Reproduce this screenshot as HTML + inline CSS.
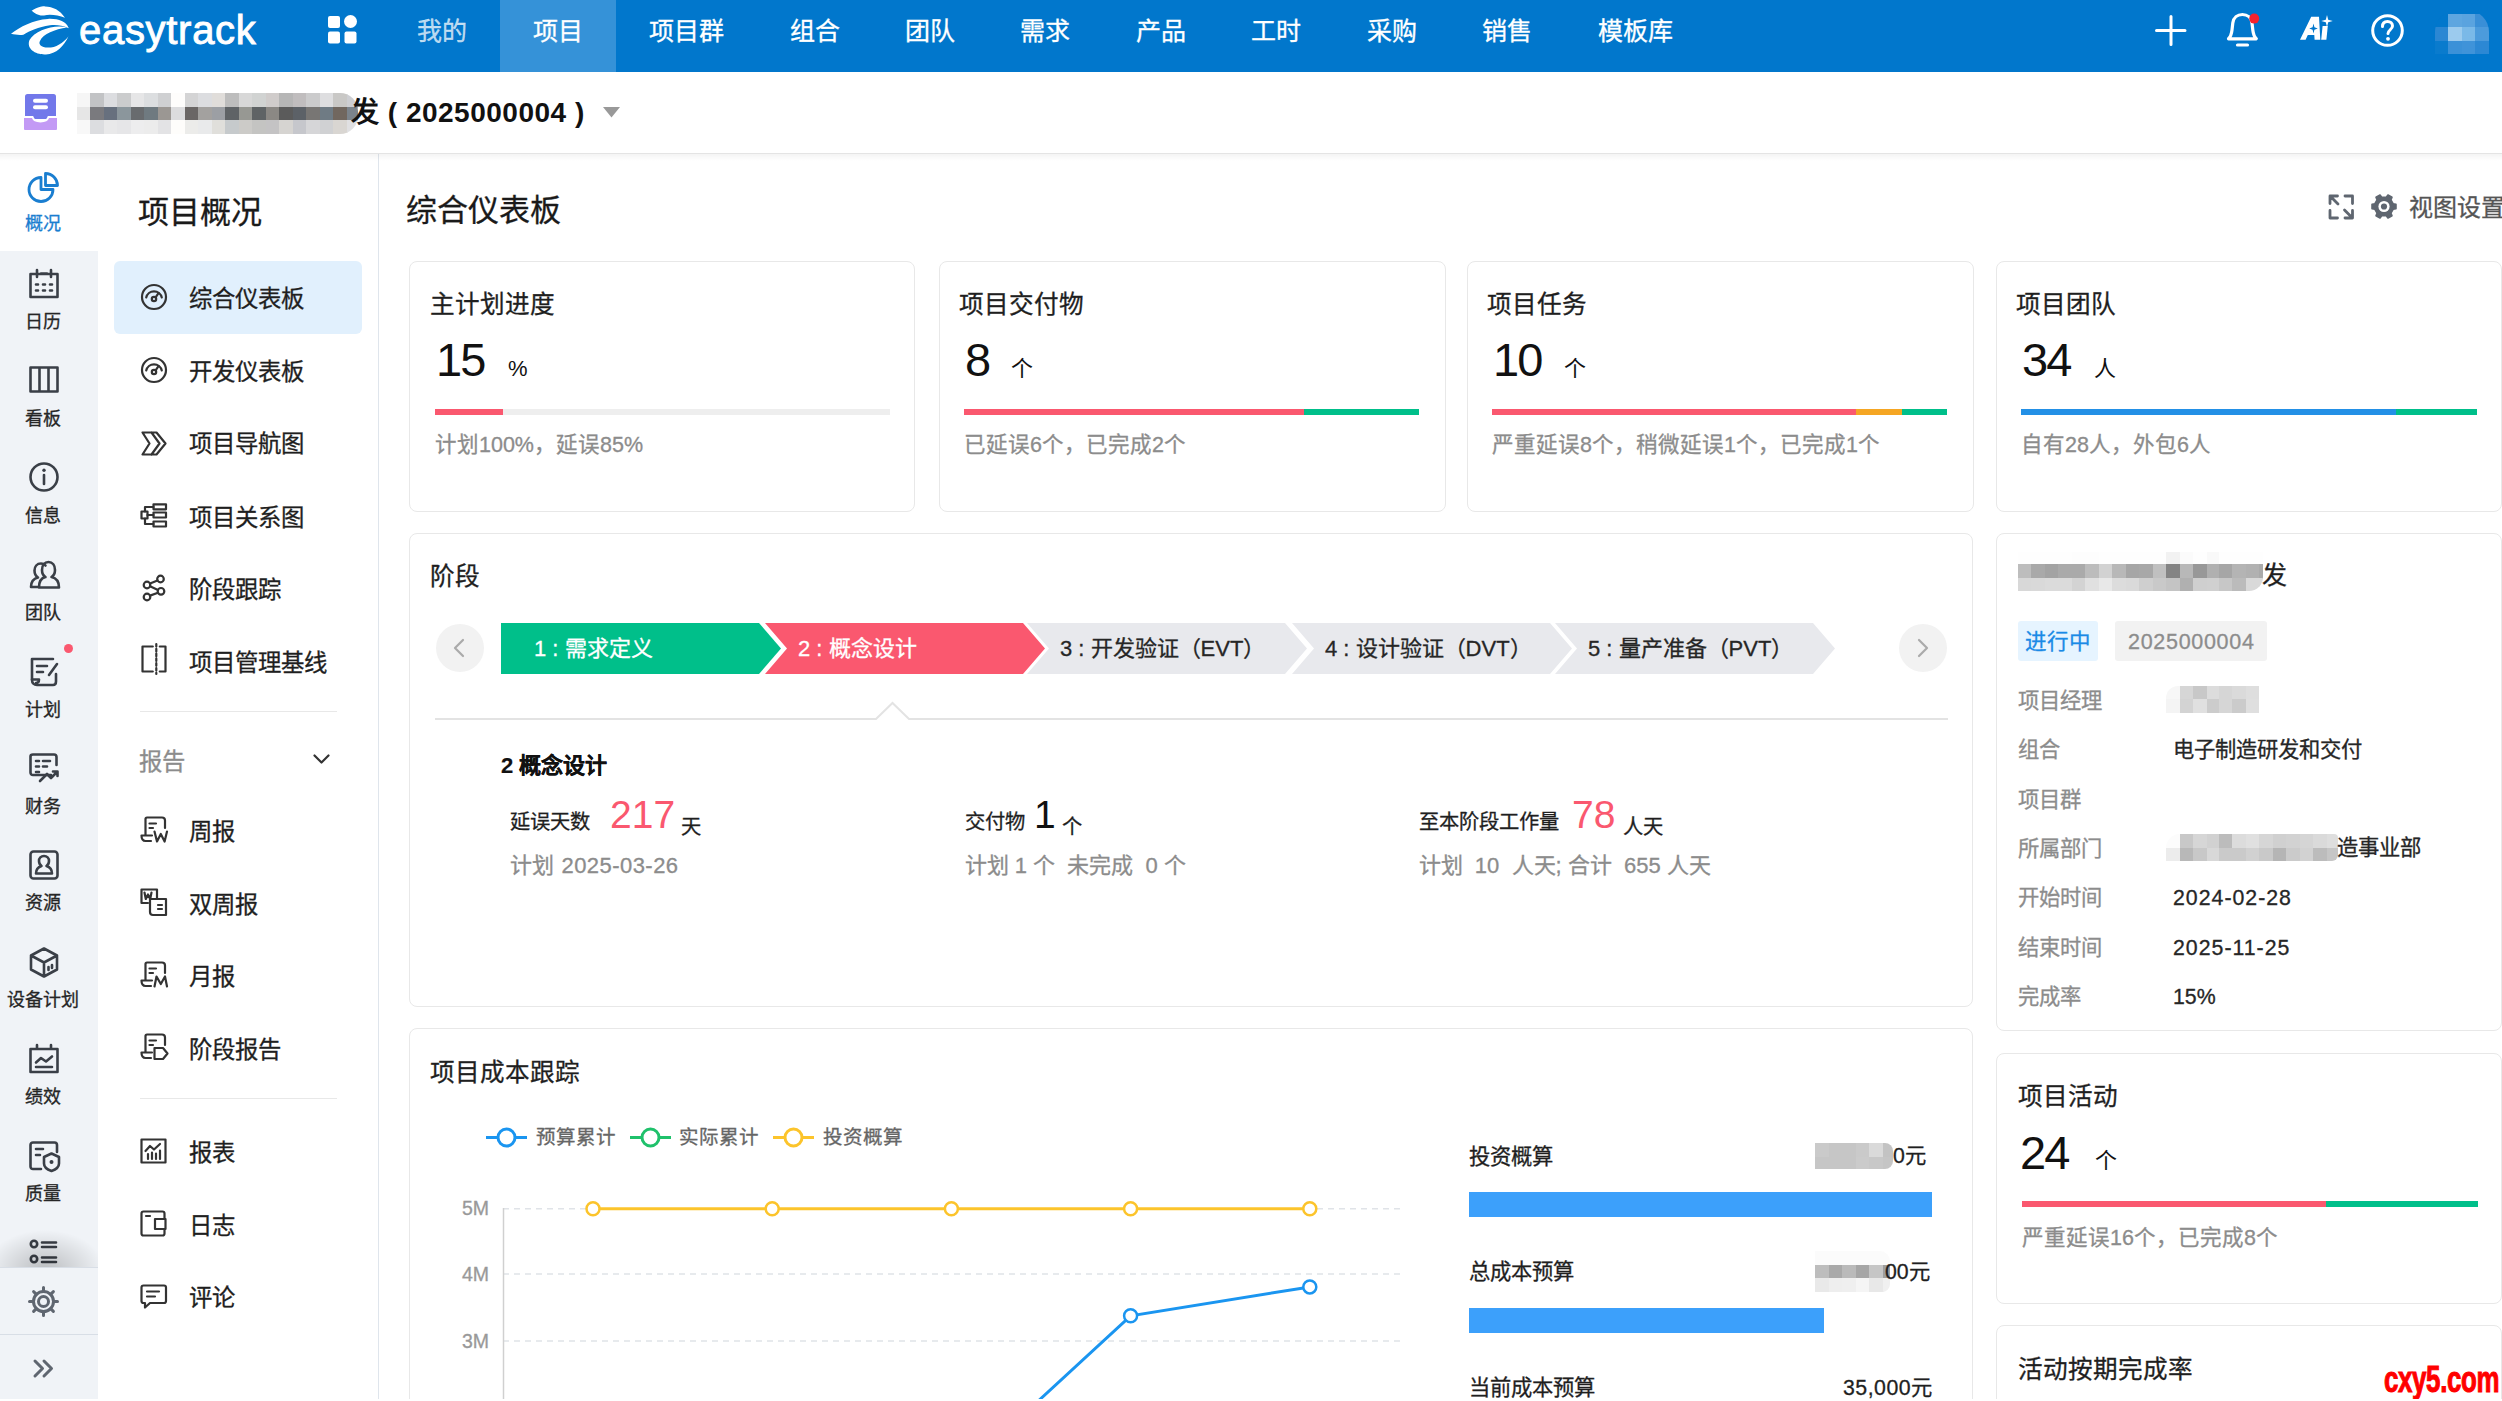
<!DOCTYPE html>
<html lang="zh-CN"><head><meta charset="utf-8">
<style>
*{box-sizing:border-box;margin:0;padding:0}
html,body{width:2502px;height:1401px;overflow:hidden;background:#fff;font-family:"Liberation Sans",sans-serif;color:#1f1f1f}
.a{position:absolute}
.t{position:absolute;white-space:nowrap;line-height:1;-webkit-text-stroke:0.3px currentColor}
svg{position:absolute;overflow:visible}
#top{left:0;top:0;width:2502px;height:72px;background:#0177cc}
.nav{color:#fff;font-size:25px;top:19px}
#hdr{left:0;top:72px;width:2502px;height:82px;background:#fff;border-bottom:1px solid #e4e4e4;}
#rail{left:0;top:154px;width:98px;height:1245px;background:#f0f3f7}
.rl{font-size:18px;color:#262626;left:0;width:86px;text-align:center;margin-top:1px}
#side{left:98px;top:154px;width:281px;height:1247px;background:#fff;border-right:1px solid #dfe5ec}
.si{font-size:23.4px;color:#1f1f1f;left:189px;margin-top:1px}
.card{position:absolute;border:1px solid #e8e8e8;border-radius:8px;background:#fff}
.ct{font-size:24.6px;color:#1f1f1f;margin-top:1px}
.big{font-size:47px;color:#111;letter-spacing:-2px;-webkit-text-stroke:0}
.unit{font-size:22px;color:#111;-webkit-text-stroke:0}
.sub{font-size:21.5px;color:#8c8c8c}
.bar{position:absolute;height:6px}
</style></head><body>

<!-- TOP BAR -->
<div id="top" class="a"></div>
<div class="a" style="left:500px;top:0;width:116px;height:72px;background:#3592d8"></div>

<div class="t nav" style="left:417px;color:rgba(255,255,255,.72)">我的</div>
<div class="t nav" style="left:533px">项目</div>
<div class="t nav" style="left:649px">项目群</div>
<div class="t nav" style="left:790px">组合</div>
<div class="t nav" style="left:905px">团队</div>
<div class="t nav" style="left:1020px">需求</div>
<div class="t nav" style="left:1136px">产品</div>
<div class="t nav" style="left:1251px">工时</div>
<div class="t nav" style="left:1367px">采购</div>
<div class="t nav" style="left:1482px">销售</div>
<div class="t nav" style="left:1598px">模板库</div>


<!-- logo -->
<svg style="left:0;top:0" width="80" height="72" viewBox="0 0 80 72">
<path fill="#fff" d="M31.6,10.7 C38,7 42,6.2 45,6.4 C53,6.6 60,10 65,17.8 C58,15 50,14 44,15.4 C38,16 35,13 31.6,10.7 Z"/>
<path fill="#fff" d="M11,33.8 C20,27 33,19.5 48,18.9 C58,18.5 66,21 68.8,28.3 C62,25 55,24.5 50,25.3 C38,27 30,31 23.4,34.7 C19,35.5 15,34.5 11,33.8 Z"/>
<path fill="#fff" d="M67,27.4 C55,24 35,30 29.5,40 C26,49 36,55 46,54.4 C56,54 64,46 68.4,36.4 C63,43 56,47.6 48,47.6 C41,47.5 38,44 40.1,40.7 C43,34 55,29 67,27.4 Z"/>
</svg>
<div class="t" id="logo" style="left:79px;top:10px;font-size:40px;color:#fff;-webkit-text-stroke:0.9px #fff;letter-spacing:0.7px">easytrack</div>
<!-- grid icon -->
<svg style="left:328px;top:15px" width="29" height="29" viewBox="0 0 29 29">
<rect x="0" y="1" width="12" height="12" rx="2" fill="#fff"/>
<circle cx="22.5" cy="6.5" r="6.5" fill="#fff"/>
<rect x="0" y="16.5" width="12" height="12" rx="2" fill="#fff"/>
<rect x="16.5" y="16.5" width="12" height="12" rx="2" fill="#fff"/>
</svg>
<!-- right icons -->
<svg style="left:2155px;top:15px" width="32" height="32" viewBox="0 0 32 32">
<path d="M16,1.5 V29.5 M1.5,15.5 H30" stroke="#fff" stroke-width="3" stroke-linecap="round"/>
</svg>
<svg style="left:2225px;top:12px" width="36" height="38" viewBox="0 0 36 38">
<path d="M3.5,26.8 C5.5,25 6.5,22 7,18 L7.8,11 C8.5,5.5 12.5,2.5 17.4,2.5 C22.3,2.5 26.3,5.5 27,11 L27.8,18 C28.3,22 29.3,25 31.3,26.8 Z" fill="none" stroke="#fff" stroke-width="3.2" stroke-linejoin="round"/>
<path d="M12.5,33 H22.5" stroke="#fff" stroke-width="3.2" stroke-linecap="round"/>
<circle cx="29.2" cy="6.6" r="5" fill="#f5222d"/>
</svg>
<svg style="left:2298px;top:14px" width="36" height="28" viewBox="0 0 36 28">
<path fill="#fff" fill-rule="evenodd" d="M2,25.7 L13.2,2.8 H21 L22.3,25.7 H16.6 L16.3,21 H9.8 L7.6,25.7 Z M15.5,9.5 L16.4,13.2 L19.8,14.5 L16.4,15.8 L15.5,19.5 L14.6,15.8 L11.2,14.5 L14.6,13.2 Z"/>
<path fill="#fff" d="M24.6,12 H29.8 L28.4,25.7 H23.2 Z"/>
<path fill="#fff" d="M29,1 L30.2,5.8 L34.8,7 L30.2,8.2 L29,13 L27.8,8.2 L23.2,7 L27.8,5.8 Z"/>
</svg>
<svg style="left:2371px;top:14px" width="33" height="33" viewBox="0 0 33 33">
<circle cx="16.5" cy="16.5" r="14.8" fill="none" stroke="#fff" stroke-width="3"/>
<path d="M11.5,12.5 C11.5,9 13.8,7.5 16.5,7.5 C19.3,7.5 21.5,9.3 21.5,12 C21.5,15.5 17,16 17,19.5" fill="none" stroke="#fff" stroke-width="3" stroke-linecap="round"/>
<circle cx="17" cy="24.8" r="1.9" fill="#fff"/>
</svg>
<!-- avatar blurred -->
<div class="a" style="left:2435px;top:10px;width:54px;height:44px;border-radius:22px 22px 0 0;overflow:hidden"><div class="a" style="left:0.2px;top:3.7px;width:13.5px;height:13.6px;background:#0177cc"></div><div class="a" style="left:13.2px;top:3.7px;width:14.3px;height:13.6px;background:#5ea6e0"></div><div class="a" style="left:27.0px;top:3.7px;width:13.5px;height:13.6px;background:#5aa3df"></div><div class="a" style="left:40.0px;top:3.7px;width:14.3px;height:13.6px;background:#3a8fd7"></div><div class="a" style="left:0.2px;top:16.8px;width:13.5px;height:14.9px;background:#2b87d3"></div><div class="a" style="left:13.2px;top:16.8px;width:14.3px;height:14.9px;background:#9ccbee"></div><div class="a" style="left:27.0px;top:16.8px;width:13.5px;height:14.9px;background:#7ab9e8"></div><div class="a" style="left:40.0px;top:16.8px;width:14.3px;height:14.9px;background:#4c9bdc"></div><div class="a" style="left:0.2px;top:31.2px;width:13.5px;height:12.8px;background:#0a7bcd"></div><div class="a" style="left:13.2px;top:31.2px;width:14.3px;height:12.8px;background:#3b91d8"></div><div class="a" style="left:27.0px;top:31.2px;width:13.5px;height:12.8px;background:#3f93d9"></div><div class="a" style="left:40.0px;top:31.2px;width:14.3px;height:12.8px;background:#2c88d4"></div></div>
<!-- HEADER -->
<div id="hdr" class="a"></div>


<svg style="left:22px;top:93px" width="37" height="39" viewBox="0 0 37 39">
<rect x="3" y="1" width="31" height="25" rx="2.5" fill="#7278ea"/>
<rect x="11" y="5.8" width="15" height="4" rx="2" fill="#fff"/>
<rect x="11" y="12.2" width="15" height="4" rx="2" fill="#fff"/>
<path d="M1,24 H10.5 C11.5,27 14,28.5 18.5,28.5 C23,28.5 25.5,27 26.5,24 H36 V36 Q36,38 34,38 H3 Q1,38 1,36 Z" fill="#c39af5" stroke="#fff" stroke-width="2"/>
</svg>
<div class="a" id="blur1" style="left:77px;top:93px;width:281px;height:41px;border-radius:0 18px 18px 0;overflow:hidden"><div class="a" style="left:0px;top:0px;width:13.6px;height:14.6px;background:#f6f6f6"></div><div class="a" style="left:13px;top:0px;width:14.6px;height:14.6px;background:#c2c3c5"></div><div class="a" style="left:27px;top:0px;width:13.6px;height:14.6px;background:#dcdde0"></div><div class="a" style="left:40px;top:0px;width:14.6px;height:14.6px;background:#cbcccd"></div><div class="a" style="left:54px;top:0px;width:13.6px;height:14.6px;background:#e6e6e7"></div><div class="a" style="left:67px;top:0px;width:14.6px;height:14.6px;background:#dcdee0"></div><div class="a" style="left:81px;top:0px;width:13.6px;height:14.6px;background:#cfd0d2"></div><div class="a" style="left:94px;top:0px;width:14.6px;height:14.6px;background:#fefdfc"></div><div class="a" style="left:108px;top:0px;width:13.6px;height:14.6px;background:#d4d4d5"></div><div class="a" style="left:121px;top:0px;width:14.6px;height:14.6px;background:#dcdde0"></div><div class="a" style="left:135px;top:0px;width:13.6px;height:14.6px;background:#e0ddda"></div><div class="a" style="left:148px;top:0px;width:14.6px;height:14.6px;background:#bdbdbd"></div><div class="a" style="left:162px;top:0px;width:13.6px;height:14.6px;background:#d8d8d8"></div><div class="a" style="left:175px;top:0px;width:14.6px;height:14.6px;background:#d1d3d2"></div><div class="a" style="left:189px;top:0px;width:13.6px;height:14.6px;background:#d0cccb"></div><div class="a" style="left:202px;top:0px;width:14.1px;height:14.6px;background:#b6b6b6"></div><div class="a" style="left:215.5px;top:0px;width:14.1px;height:14.6px;background:#c0bdbe"></div><div class="a" style="left:229px;top:0px;width:14.6px;height:14.6px;background:#cbcbcc"></div><div class="a" style="left:243px;top:0px;width:13.6px;height:14.6px;background:#dedee0"></div><div class="a" style="left:256px;top:0px;width:14.6px;height:14.6px;background:#c9c8c6"></div><div class="a" style="left:270px;top:0px;width:11.6px;height:14.6px;background:#cdced2"></div><div class="a" style="left:0px;top:14px;width:13.6px;height:13.6px;background:#e6e6e6"></div><div class="a" style="left:13px;top:14px;width:14.6px;height:13.6px;background:#7a7a7e"></div><div class="a" style="left:27px;top:14px;width:13.6px;height:13.6px;background:#67707e"></div><div class="a" style="left:40px;top:14px;width:14.6px;height:13.6px;background:#8b969c"></div><div class="a" style="left:54px;top:14px;width:13.6px;height:13.6px;background:#686b6e"></div><div class="a" style="left:67px;top:14px;width:14.6px;height:13.6px;background:#6f7a80"></div><div class="a" style="left:81px;top:14px;width:13.6px;height:13.6px;background:#9b9793"></div><div class="a" style="left:94px;top:14px;width:14.6px;height:13.6px;background:#dcdcde"></div><div class="a" style="left:108px;top:14px;width:13.6px;height:13.6px;background:#6a6665"></div><div class="a" style="left:121px;top:14px;width:14.6px;height:13.6px;background:#a3a19f"></div><div class="a" style="left:135px;top:14px;width:13.6px;height:13.6px;background:#9c9fa4"></div><div class="a" style="left:148px;top:14px;width:14.6px;height:13.6px;background:#5f6366"></div><div class="a" style="left:162px;top:14px;width:13.6px;height:13.6px;background:#979893"></div><div class="a" style="left:175px;top:14px;width:14.6px;height:13.6px;background:#5f6365"></div><div class="a" style="left:189px;top:14px;width:13.6px;height:13.6px;background:#8b8884"></div><div class="a" style="left:202px;top:14px;width:14.1px;height:13.6px;background:#5b5b5b"></div><div class="a" style="left:215.5px;top:14px;width:14.1px;height:13.6px;background:#5c6167"></div><div class="a" style="left:229px;top:14px;width:14.6px;height:13.6px;background:#787674"></div><div class="a" style="left:243px;top:14px;width:13.6px;height:13.6px;background:#6f7b84"></div><div class="a" style="left:256px;top:14px;width:14.6px;height:13.6px;background:#71675f"></div><div class="a" style="left:270px;top:14px;width:11.6px;height:13.6px;background:#7b838b"></div><div class="a" style="left:0px;top:27px;width:13.6px;height:14.6px;background:#f8f8f8"></div><div class="a" style="left:13px;top:27px;width:14.6px;height:14.6px;background:#dcdde0"></div><div class="a" style="left:27px;top:27px;width:13.6px;height:14.6px;background:#e9e9ea"></div><div class="a" style="left:40px;top:27px;width:14.6px;height:14.6px;background:#e6e6e8"></div><div class="a" style="left:54px;top:27px;width:13.6px;height:14.6px;background:#ededee"></div><div class="a" style="left:67px;top:27px;width:14.6px;height:14.6px;background:#ececec"></div><div class="a" style="left:81px;top:27px;width:13.6px;height:14.6px;background:#e3e3e5"></div><div class="a" style="left:94px;top:27px;width:14.6px;height:14.6px;background:#fefdfb"></div><div class="a" style="left:108px;top:27px;width:13.6px;height:14.6px;background:#ececea"></div><div class="a" style="left:121px;top:27px;width:14.6px;height:14.6px;background:#e9eaeb"></div><div class="a" style="left:135px;top:27px;width:13.6px;height:14.6px;background:#e0dfdb"></div><div class="a" style="left:148px;top:27px;width:14.6px;height:14.6px;background:#c6cacc"></div><div class="a" style="left:162px;top:27px;width:13.6px;height:14.6px;background:#cccbc8"></div><div class="a" style="left:175px;top:27px;width:14.6px;height:14.6px;background:#c4c4c2"></div><div class="a" style="left:189px;top:27px;width:13.6px;height:14.6px;background:#c4c3c4"></div><div class="a" style="left:202px;top:27px;width:14.1px;height:14.6px;background:#d6d4d1"></div><div class="a" style="left:215.5px;top:27px;width:14.1px;height:14.6px;background:#c6c7cc"></div><div class="a" style="left:229px;top:27px;width:14.6px;height:14.6px;background:#d6d6d8"></div><div class="a" style="left:243px;top:27px;width:13.6px;height:14.6px;background:#d0d1d3"></div><div class="a" style="left:256px;top:27px;width:14.6px;height:14.6px;background:#d9d6d2"></div><div class="a" style="left:270px;top:27px;width:11.6px;height:14.6px;background:#e0e0e2"></div></div>
<div class="t" id="ptitle" style="left:351px;top:99px;font-size:28px;font-weight:bold;color:#111;letter-spacing:0.5px;-webkit-text-stroke:0">发 ( 2025000004 )</div>
<svg style="left:603px;top:107px" width="18" height="11" viewBox="0 0 18 11"><path d="M0,0 H17 L8.5,10.5 Z" fill="#999"/></svg>

<!-- RAIL -->
<div id="rail" class="a"></div>
<div class="a" style="left:0;top:154px;width:98px;height:97px;background:#fff"></div>

<svg style="left:28px;top:172px" width="32" height="32" viewBox="0 0 32 32"><path d="M13,5.5 A12,12 0 1 0 25,17.5 H13 Z" fill="none" stroke="#1a7ed0" stroke-width="2.8" stroke-linejoin="round"/><path d="M17.5,1.5 A12,12 0 0 1 29.5,13.5 H17.5 Z" fill="none" stroke="#1a7ed0" stroke-width="2.8" stroke-linejoin="round"/></svg>
<div class="t rl" style="top:214px;color:#1a7ed0">概况</div>
<svg style="left:29px;top:268.5px" width="32" height="32" viewBox="0 0 32 32"><path d="M1.5,5 H28.5 V28 H1.5 Z M8,1 V8 M22,1 V8 M12,4.5 H18" fill="none" stroke="#3a3f47" stroke-width="2.6" stroke-linecap="round" stroke-linejoin="round"/><path d="M7,15.5 H9 M14,15.5 H16 M21,15.5 H23 M7,21.5 H9 M14,21.5 H16 M21,21.5 H23" fill="none" stroke="#3a3f47" stroke-width="2.6" stroke-linecap="round" stroke-linejoin="round" stroke-width="2.4"/></svg>
<div class="t rl" style="top:312.0px">日历</div>
<svg style="left:29px;top:365.4px" width="32" height="32" viewBox="0 0 32 32"><path d="M1.5,2.5 H28.5 V26.5 H1.5 Z M10.5,2.5 V26.5 M19.5,2.5 V26.5" fill="none" stroke="#3a3f47" stroke-width="2.6" stroke-linecap="round" stroke-linejoin="round"/></svg>
<div class="t rl" style="top:408.9px">看板</div>
<svg style="left:29px;top:462.3px" width="32" height="32" viewBox="0 0 32 32"><circle cx="15" cy="15" r="13.5" fill="none" stroke="#3a3f47" stroke-width="2.6" stroke-linecap="round" stroke-linejoin="round"/><path d="M15,13 V22" fill="none" stroke="#3a3f47" stroke-width="2.6" stroke-linecap="round" stroke-linejoin="round" stroke-width="3"/><circle cx="15" cy="8.3" r="1.7" fill="#3a3f47"/></svg>
<div class="t rl" style="top:505.8px">信息</div>
<svg style="left:29px;top:559.2px" width="32" height="32" viewBox="0 0 32 32"><path d="M9,28 H2 C2,22 5,19.5 9,18.5 C6.5,17 5.5,14.5 5.5,11.5 C5.5,7.5 8,4.5 12,4.5 C14,4.5 15.5,5.3 16.5,6.5" fill="none" stroke="#3a3f47" stroke-width="2.6" stroke-linecap="round" stroke-linejoin="round"/><path d="M10,28.5 H30 C30,22.5 27,19 22.5,18 C25,16.5 26,14 26,11 C26,6.5 23.5,3 19.5,3 C15.5,3 13,6.5 13,11 C13,14 14,16.5 16.5,18 C12,19 10,22.5 10,28.5 Z" fill="none" stroke="#3a3f47" stroke-width="2.6" stroke-linecap="round" stroke-linejoin="round"/></svg>
<div class="t rl" style="top:602.7px">团队</div>
<svg style="left:29px;top:656.1px" width="32" height="32" viewBox="0 0 32 32"><path d="M24,3 H3 V24 C3,27 5,29 8,29 H24 C26,29 27,27.5 27,25.5 V18" fill="none" stroke="#3a3f47" stroke-width="2.6" stroke-linecap="round" stroke-linejoin="round"/><path d="M7,27 C9,27 10,26 10,23.5 H3" fill="none" stroke="#3a3f47" stroke-width="2.6" stroke-linecap="round" stroke-linejoin="round"/><path d="M8,10 H18 M8,16 H14" fill="none" stroke="#3a3f47" stroke-width="2.6" stroke-linecap="round" stroke-linejoin="round"/><path d="M28,8 L20,19" fill="none" stroke="#3a3f47" stroke-width="2.6" stroke-linecap="round" stroke-linejoin="round"/></svg>
<div class="t rl" style="top:699.6px">计划</div>
<svg style="left:29px;top:753.0px" width="32" height="32" viewBox="0 0 32 32"><path d="M22,22 H4 C2.5,22 1.5,21 1.5,19.5 V3.5 C1.5,2 2.5,1.5 4,1.5 H25 C26.5,1.5 27.5,2.5 27.5,4 V12" fill="none" stroke="#3a3f47" stroke-width="2.6" stroke-linecap="round" stroke-linejoin="round"/><path d="M7,8 H10 M14,8 H21 M7,13.5 H10 M14,13.5 H18 M7,19 H10" fill="none" stroke="#3a3f47" stroke-width="2.6" stroke-linecap="round" stroke-linejoin="round"/><path d="M11,28 L18,21 L22,25 L28,19 M24,18.5 H28.5 V23" fill="none" stroke="#3a3f47" stroke-width="2.6" stroke-linecap="round" stroke-linejoin="round"/></svg>
<div class="t rl" style="top:796.5px">财务</div>
<svg style="left:29px;top:849.9px" width="32" height="32" viewBox="0 0 32 32"><rect x="1.5" y="1.5" width="27" height="27" rx="3" fill="none" stroke="#3a3f47" stroke-width="2.6" stroke-linecap="round" stroke-linejoin="round"/><path d="M7,23.5 C7,19 9.5,17 12.5,16 C10.5,14.5 10,13 10,11 C10,8 12,6 15,6 C18,6 20,8 20,11 C20,13 19.5,14.5 17.5,16 C20.5,17 23,19 23,23.5 Z" fill="none" stroke="#3a3f47" stroke-width="2.6" stroke-linecap="round" stroke-linejoin="round"/></svg>
<div class="t rl" style="top:893.4px">资源</div>
<svg style="left:29px;top:946.8px" width="32" height="32" viewBox="0 0 32 32"><path d="M15,1.5 L28,8.5 V22.5 L15,29.5 L2,22.5 V8.5 Z M2,8.5 L15,15.5 L28,8.5 M15,15.5 V29.5" fill="none" stroke="#3a3f47" stroke-width="2.6" stroke-linecap="round" stroke-linejoin="round"/><path d="M19.5,20 V23 M23,18 V21" fill="none" stroke="#3a3f47" stroke-width="2.6" stroke-linecap="round" stroke-linejoin="round"/></svg>
<div class="t rl" style="top:990.3px">设备计划</div>
<svg style="left:29px;top:1043.7px" width="32" height="32" viewBox="0 0 32 32"><path d="M1.5,5 H28.5 V28 H1.5 Z M8,1 V5 M22,1 V5" fill="none" stroke="#3a3f47" stroke-width="2.6" stroke-linecap="round" stroke-linejoin="round"/><path d="M7,18.5 L12,14 L17,17.5 L23,12.5 M7,23 H23" fill="none" stroke="#3a3f47" stroke-width="2.6" stroke-linecap="round" stroke-linejoin="round"/></svg>
<div class="t rl" style="top:1087.2px">绩效</div>
<svg style="left:29px;top:1140.6px" width="32" height="32" viewBox="0 0 32 32"><path d="M12,28 H4 C2.5,28 1.5,27 1.5,25.5 V4 C1.5,2.5 2.5,1.5 4,1.5 H25.5 C27,1.5 28,2.5 28,4 V11" fill="none" stroke="#3a3f47" stroke-width="2.6" stroke-linecap="round" stroke-linejoin="round"/><path d="M7,8 H14 M7,14 H11" fill="none" stroke="#3a3f47" stroke-width="2.6" stroke-linecap="round" stroke-linejoin="round"/><path d="M15,16 L22.5,12.5 L30,16 V22.5 C30,26 27,28.5 22.5,30 C18,28.5 15,26 15,22.5 Z" fill="none" stroke="#3a3f47" stroke-width="2.6" stroke-linecap="round" stroke-linejoin="round"/><circle cx="22.5" cy="21" r="2" fill="#3a3f47"/></svg>
<div class="t rl" style="top:1184.1px">质量</div>
<div class="a" style="left:64px;top:644px;width:9px;height:9px;border-radius:50%;background:#fa586f"></div>
<svg style="left:30px;top:1240px" width="28" height="26" viewBox="0 0 28 26"><circle cx="4" cy="4" r="3.2" fill="none" stroke="#3a3f47" stroke-width="2.6" stroke-linecap="round" stroke-linejoin="round"/><circle cx="4" cy="19" r="3.2" fill="none" stroke="#3a3f47" stroke-width="2.6" stroke-linecap="round" stroke-linejoin="round"/><path d="M12,2.5 H26 M12,7 H26 M12,17.5 H26 M12,22 H26" fill="none" stroke="#3a3f47" stroke-width="2.6" stroke-linecap="round" stroke-linejoin="round"/></svg>
<div class="a" style="left:0;top:1218px;width:98px;height:50px;background:radial-gradient(ellipse 60px 40px at 45px 52px,rgba(0,0,0,.22),rgba(0,0,0,0) 100%)"></div>
<div class="a" style="left:0;top:1267px;width:98px;height:1px;background:#d8dee6"></div>
<div class="a" style="left:0;top:1334px;width:98px;height:1px;background:#d8dee6"></div>
<svg style="left:28px;top:1286px" width="32" height="32" viewBox="0 0 32 32"><circle cx="15.5" cy="15.5" r="10" fill="none" stroke="#5f6670" stroke-width="3" stroke-linecap="round" stroke-linejoin="round"/><circle cx="15.5" cy="15.5" r="5" fill="none" stroke="#5f6670" stroke-width="3" stroke-linecap="round" stroke-linejoin="round"/><path d="M15.5,1.5 V5.5 M15.5,25.5 V29.5 M1.5,15.5 H5.5 M25.5,15.5 H29.5 M5.6,5.6 L8.4,8.4 M22.6,22.6 L25.4,25.4 M5.6,25.4 L8.4,22.6 M22.6,8.4 L25.4,5.6" fill="none" stroke="#5f6670" stroke-width="3" stroke-linecap="round" stroke-linejoin="round"/></svg>
<svg style="left:33px;top:1359px" width="22" height="20" viewBox="0 0 22 20"><path d="M2,2 L9.5,9.5 L2,17 M11,2 L18.5,9.5 L11,17" fill="none" stroke="#5f6670" stroke-width="3" stroke-linecap="round" stroke-linejoin="round"/></svg>

<!-- SIDEBAR -->
<div id="side" class="a"></div>
<div class="a" style="left:0;top:154px;width:2502px;height:7px;background:linear-gradient(rgba(0,0,0,.045),rgba(0,0,0,0))"></div>

<div class="t" style="left:138px;top:197px;font-size:31px;color:#1a1a1a">项目概况</div>
<div class="a" style="left:114px;top:261px;width:248px;height:73px;background:#e1f0fd;border-radius:6px"></div>
<svg style="left:141px;top:284px" width="30" height="30" viewBox="0 0 30 30"><circle cx="13" cy="13" r="12" fill="none" stroke="#333" stroke-width="2.2" stroke-linecap="round" stroke-linejoin="round"/><path d="M5.2,13.5 A8,8 0 0 1 20.8,13.5" fill="none" stroke="#333" stroke-width="2.2" stroke-linecap="round" stroke-linejoin="round"/><circle cx="13" cy="15" r="2.2" fill="none" stroke="#333" stroke-width="2.2" stroke-linecap="round" stroke-linejoin="round"/><path d="M14.6,13.3 L17.5,9.2" fill="none" stroke="#333" stroke-width="2.2" stroke-linecap="round" stroke-linejoin="round"/></svg>
<div class="t si" style="top:286.7px">综合仪表板</div>
<svg style="left:141px;top:357px" width="30" height="30" viewBox="0 0 30 30"><circle cx="13" cy="13" r="12" fill="none" stroke="#333" stroke-width="2.2" stroke-linecap="round" stroke-linejoin="round"/><path d="M5.2,13.5 A8,8 0 0 1 20.8,13.5" fill="none" stroke="#333" stroke-width="2.2" stroke-linecap="round" stroke-linejoin="round"/><circle cx="13" cy="15" r="2.2" fill="none" stroke="#333" stroke-width="2.2" stroke-linecap="round" stroke-linejoin="round"/><path d="M14.6,13.3 L17.5,9.2" fill="none" stroke="#333" stroke-width="2.2" stroke-linecap="round" stroke-linejoin="round"/></svg>
<div class="t si" style="top:360.4px">开发仪表板</div>
<svg style="left:141px;top:431px" width="30" height="30" viewBox="0 0 30 30"><path d="M1.5,1.5 H15.5 L24.5,12.5 L15.5,23.5 H1.5 L8.5,12.5 Z M10.5,1.5 L18.5,12.5 L10.5,23.5" fill="none" stroke="#333" stroke-width="2.2" stroke-linecap="round" stroke-linejoin="round" stroke-width="2"/></svg>
<div class="t si" style="top:432.4px">项目导航图</div>
<svg style="left:141px;top:503px" width="30" height="30" viewBox="0 0 30 30"><rect x="0.5" y="8.5" width="6" height="7" fill="none" stroke="#333" stroke-width="2.2" stroke-linecap="round" stroke-linejoin="round" stroke-width="1.9"/><path d="M4,8.5 V4 H12.5 M4,15.5 V21 H12.5 M6.5,12 H12.5" fill="none" stroke="#333" stroke-width="2.2" stroke-linecap="round" stroke-linejoin="round" stroke-width="1.9"/><rect x="12.5" y="1.3" width="12.5" height="5" fill="none" stroke="#333" stroke-width="2.2" stroke-linecap="round" stroke-linejoin="round" stroke-width="1.9"/><rect x="12.5" y="9.5" width="12.5" height="5" fill="none" stroke="#333" stroke-width="2.2" stroke-linecap="round" stroke-linejoin="round" stroke-width="1.9"/><rect x="12.5" y="18.5" width="12.5" height="5" fill="none" stroke="#333" stroke-width="2.2" stroke-linecap="round" stroke-linejoin="round" stroke-width="1.9"/></svg>
<div class="t si" style="top:505.8px">项目关系图</div>
<svg style="left:142px;top:575px" width="30" height="30" viewBox="0 0 30 30"><circle cx="5" cy="10" r="3.3" fill="none" stroke="#333" stroke-width="2.2" stroke-linecap="round" stroke-linejoin="round" stroke-width="2"/><circle cx="18.5" cy="4" r="3.3" fill="none" stroke="#333" stroke-width="2.2" stroke-linecap="round" stroke-linejoin="round" stroke-width="2"/><circle cx="19" cy="16.3" r="3.3" fill="none" stroke="#333" stroke-width="2.2" stroke-linecap="round" stroke-linejoin="round" stroke-width="2"/><circle cx="5" cy="22" r="3.3" fill="none" stroke="#333" stroke-width="2.2" stroke-linecap="round" stroke-linejoin="round" stroke-width="2"/><path d="M8,8.6 L15.5,5.4 M8,11.2 L16,15 M16,17.8 L8,20.6" fill="none" stroke="#333" stroke-width="2.2" stroke-linecap="round" stroke-linejoin="round" stroke-width="2"/></svg>
<div class="t si" style="top:577.6px">阶段跟踪</div>
<svg style="left:141px;top:645px" width="30" height="30" viewBox="0 0 30 30"><path d="M11.8,1.5 H1.5 V26.5 H11.8 M18.8,1.5 H24.5 V26.5 H18.8" fill="none" stroke="#333" stroke-width="2.2" stroke-linecap="round" stroke-linejoin="round" stroke-width="2.2" stroke-linecap="butt"/><path d="M15.3,-1 V29" fill="none" stroke="#333" stroke-width="2.2" stroke-linecap="round" stroke-linejoin="round" stroke-width="1.8" stroke-dasharray="2.6,2.2" stroke-linecap="butt"/></svg>
<div class="t si" style="top:650.8px">项目管理基线</div>
<div class="a" style="left:140px;top:711px;width:197px;height:1px;background:#e8e8e8"></div>
<div class="t" style="left:139px;top:751px;font-size:23.4px;color:#8c8c8c">报告</div>
<svg style="left:313px;top:754px" width="18" height="12" viewBox="0 0 18 12"><path d="M1.5,1.5 L8.5,8.5 L15.5,1.5" fill="none" stroke="#333" stroke-width="2.2" stroke-linecap="round" stroke-linejoin="round" stroke-width="2.4"/></svg>
<svg style="left:140px;top:816px" width="30" height="30" viewBox="0 0 30 30"><path d="M5.5,19 V3 Q5.5,1.5 7,1.5 H22 Q25,1.5 25,4.5 V12" fill="none" stroke="#333" stroke-width="2.2" stroke-linecap="round" stroke-linejoin="round" stroke-width="2"/><path d="M1.5,19.5 H12 M1.5,19.5 C1.5,23 3,25 5.5,25 H11" fill="none" stroke="#333" stroke-width="2.2" stroke-linecap="round" stroke-linejoin="round" stroke-width="2"/><path d="M9.5,7.5 H16 M9.5,12 H13" fill="none" stroke="#333" stroke-width="2.2" stroke-linecap="round" stroke-linejoin="round" stroke-width="2"/><path d="M14.5,15.5 L17,25.5 L20.8,18 L24.6,25.5 L27,15.5" fill="none" stroke="#333" stroke-width="2.2" stroke-linecap="round" stroke-linejoin="round" stroke-width="1.9"/></svg>
<div class="t si" style="top:819.7px">周报</div>
<svg style="left:140px;top:888px" width="30" height="30" viewBox="0 0 30 30"><path d="M17,2 V1.5 H1.5 V15 H8" fill="none" stroke="#333" stroke-width="2.2" stroke-linecap="round" stroke-linejoin="round" stroke-width="2"/><path d="M17,2 V11 M10,11 H26 V27 H13 C11,27 10,26 10,24 V11" fill="none" stroke="#333" stroke-width="2.2" stroke-linecap="round" stroke-linejoin="round" stroke-width="2"/><path d="M4.5,4.5 L5.8,11 L8,6.5 L10.2,11 L11.5,4.5" fill="none" stroke="#333" stroke-width="2.2" stroke-linecap="round" stroke-linejoin="round" stroke-width="1.7"/><path d="M18,17 H22 M18,21 H22" fill="none" stroke="#333" stroke-width="2.2" stroke-linecap="round" stroke-linejoin="round" stroke-width="1.7"/></svg>
<div class="t si" style="top:892.7px">双周报</div>
<svg style="left:140px;top:961px" width="30" height="30" viewBox="0 0 30 30"><path d="M5.5,19 V3 Q5.5,1.5 7,1.5 H22 Q25,1.5 25,4.5 V12" fill="none" stroke="#333" stroke-width="2.2" stroke-linecap="round" stroke-linejoin="round" stroke-width="2"/><path d="M1.5,19.5 H12 M1.5,19.5 C1.5,23 3,25 5.5,25 H11" fill="none" stroke="#333" stroke-width="2.2" stroke-linecap="round" stroke-linejoin="round" stroke-width="2"/><path d="M9.5,7.5 H16 M9.5,12 H13" fill="none" stroke="#333" stroke-width="2.2" stroke-linecap="round" stroke-linejoin="round" stroke-width="2"/><path d="M14.5,25.5 L16.5,15.5 L20.8,23 L25,15.5 L27,25.5" fill="none" stroke="#333" stroke-width="2.2" stroke-linecap="round" stroke-linejoin="round" stroke-width="1.9"/></svg>
<div class="t si" style="top:965.1px">月报</div>
<svg style="left:140px;top:1033px" width="30" height="30" viewBox="0 0 30 30"><path d="M5.5,19 V3 Q5.5,1.5 7,1.5 H22 Q25,1.5 25,4.5 V12" fill="none" stroke="#333" stroke-width="2.2" stroke-linecap="round" stroke-linejoin="round" stroke-width="2"/><path d="M1.5,19.5 H12 M1.5,19.5 C1.5,23 3,25 5.5,25 H11" fill="none" stroke="#333" stroke-width="2.2" stroke-linecap="round" stroke-linejoin="round" stroke-width="2"/><path d="M9.5,7.5 H16 M9.5,12 H13" fill="none" stroke="#333" stroke-width="2.2" stroke-linecap="round" stroke-linejoin="round" stroke-width="2"/><path d="M14.5,15 H23 L27.5,20.5 L23,26 H14.5 Z" fill="none" stroke="#333" stroke-width="2.2" stroke-linecap="round" stroke-linejoin="round" stroke-width="2"/></svg>
<div class="t si" style="top:1037.5px">阶段报告</div>
<div class="a" style="left:140px;top:1098px;width:197px;height:1px;background:#e8e8e8"></div>
<svg style="left:140px;top:1138px" width="30" height="30" viewBox="0 0 30 30"><rect x="1.5" y="1.5" width="24" height="23" fill="none" stroke="#333" stroke-width="2.2" stroke-linecap="round" stroke-linejoin="round" stroke-width="2"/><path d="M5.5,13 L10,8 L14,11.5 L20,6" fill="none" stroke="#333" stroke-width="2.2" stroke-linecap="round" stroke-linejoin="round" stroke-width="1.8"/><path d="M8,21 V16 M12,21 V14.5 M16,21 V15.5 M20,21 V12.5" fill="none" stroke="#333" stroke-width="2.2" stroke-linecap="round" stroke-linejoin="round" stroke-width="1.8"/></svg>
<div class="t si" style="top:1140.9px">报表</div>
<svg style="left:140px;top:1210px" width="30" height="30" viewBox="0 0 30 30"><path d="M24.5,9 V3.5 C24.5,2 23.5,1.5 22.5,1.5 H3.5 C2.5,1.5 1.5,2 1.5,3.5 V23.5 C1.5,25 2.5,25.5 3.5,25.5 H22.5 C23.5,25.5 24.5,25 24.5,23.5 V19" fill="none" stroke="#333" stroke-width="2.2" stroke-linecap="round" stroke-linejoin="round" stroke-width="2"/><path d="M15,9 H25.5 V19 H15 Z" fill="none" stroke="#333" stroke-width="2.2" stroke-linecap="round" stroke-linejoin="round" stroke-width="2"/><path d="M6,6 H10" fill="none" stroke="#333" stroke-width="2.2" stroke-linecap="round" stroke-linejoin="round" stroke-width="2"/></svg>
<div class="t si" style="top:1213.5px">日志</div>
<svg style="left:140px;top:1284px" width="30" height="30" viewBox="0 0 30 30"><path d="M3.5,1.5 H24 C25.2,1.5 26,2.3 26,3.5 V17 C26,18.2 25.2,19 24,19 H10 L5,23.5 V19 H3.5 C2.3,19 1.5,18.2 1.5,17 V3.5 C1.5,2.3 2.3,1.5 3.5,1.5 Z" fill="none" stroke="#333" stroke-width="2.2" stroke-linecap="round" stroke-linejoin="round" stroke-width="2"/><path d="M7,7.5 H19 M7,12.5 H15" fill="none" stroke="#333" stroke-width="2.2" stroke-linecap="round" stroke-linejoin="round" stroke-width="2"/></svg>
<div class="t si" style="top:1286.0px">评论</div>

<!-- MAIN -->
<div class="t" style="left:406px;top:195px;font-size:31px;color:#1a1a1a">综合仪表板</div>
<svg style="left:2328px;top:194px" width="27" height="26" viewBox="0 0 27 26"><path d="M2,9.5 V2 H9.5 M2.8,2.8 L10,10 M17,2 H24.5 V9.5 M2,16.5 V24 H9.5 M24.5,16.5 V24 H17 M23.7,23.2 L16.5,16" fill="none" stroke="#5f6670" stroke-width="2.8" stroke-linecap="round" stroke-linejoin="round"/></svg>
<svg style="left:2371px;top:194px" width="27" height="26" viewBox="0 0 27 26"><path d="M22.23,9.85 L24.98,10.17 L24.98,14.83 L22.23,15.15 L19.91,19.17 L21.00,21.71 L16.97,24.04 L15.32,21.81 L10.68,21.81 L9.03,24.04 L5.00,21.71 L6.09,19.17 L3.77,15.15 L1.02,14.83 L1.02,10.17 L3.77,9.85 L6.09,5.83 L5.00,3.29 L9.03,0.96 L10.68,3.19 L15.32,3.19 L16.97,0.96 L21.00,3.29 L19.91,5.83 Z" fill="#5f6670" stroke="#5f6670" stroke-width="1.6" stroke-linejoin="round"/><circle cx="13" cy="12.5" r="5.6" fill="#fff"/><circle cx="13" cy="12.5" r="3.1" fill="#5f6670"/></svg>
<div class="t" style="left:2409px;top:196px;font-size:24px;color:#555">视图设置</div>
<div class="card" style="left:409px;top:261px;width:506px;height:251px"></div>
<div class="card" style="left:939px;top:261px;width:507px;height:251px"></div>
<div class="card" style="left:1467px;top:261px;width:507px;height:251px"></div>
<div class="card" style="left:1996px;top:261px;width:506px;height:251px"></div>
<div class="t ct" style="left:430px;top:292px">主计划进度</div>
<div class="t big" style="left:436px;top:336px">15</div>
<div class="t unit" style="left:508px;top:358px">%</div>
<div class="bar" style="left:435px;top:409px;width:68px;background:#fa586f"></div>
<div class="bar" style="left:503px;top:409px;width:387px;background:#eeeeee"></div>
<div class="t sub" style="left:435px;top:435px">计划100%，延误85%</div>
<div class="t ct" style="left:959px;top:292px">项目交付物</div>
<div class="t big" style="left:965px;top:336px">8</div>
<div class="t unit" style="left:1011px;top:358px">个</div>
<div class="bar" style="left:964px;top:409px;width:340px;background:#fa586f"></div>
<div class="bar" style="left:1304px;top:409px;width:115px;background:#00bf8a"></div>
<div class="t sub" style="left:964px;top:435px">已延误6个，已完成2个</div>
<div class="t ct" style="left:1487px;top:292px">项目任务</div>
<div class="t big" style="left:1493px;top:336px">10</div>
<div class="t unit" style="left:1564px;top:358px">个</div>
<div class="bar" style="left:1492px;top:409px;width:364px;background:#fa586f"></div>
<div class="bar" style="left:1856px;top:409px;width:46px;background:#f5a623"></div>
<div class="bar" style="left:1902px;top:409px;width:45px;background:#00bf8a"></div>
<div class="t sub" style="left:1492px;top:435px">严重延误8个，稍微延误1个，已完成1个</div>
<div class="t ct" style="left:2016px;top:292px">项目团队</div>
<div class="t big" style="left:2022px;top:336px">34</div>
<div class="t unit" style="left:2094px;top:358px">人</div>
<div class="bar" style="left:2021px;top:409px;width:375px;background:#2390e6"></div>
<div class="bar" style="left:2396px;top:409px;width:81px;background:#00bf8a"></div>
<div class="t sub" style="left:2021px;top:435px">自有28人，外包6人</div>
<div class="card" style="left:409px;top:533px;width:1564px;height:474px"></div>
<div class="t ct" style="left:430px;top:564px">阶段</div>
<div class="a" style="left:436px;top:624px;width:48px;height:48px;border-radius:50%;background:#f2f2f2"></div>
<svg style="left:452px;top:638px" width="14" height="20" viewBox="0 0 14 20"><path d="M11,2 L3,10 L11,18" fill="none" stroke="#aaa" stroke-width="2.2" stroke-linecap="round" stroke-linejoin="round"/></svg>
<div class="a" style="left:1899px;top:624px;width:48px;height:48px;border-radius:50%;background:#f2f2f2"></div>
<svg style="left:1916px;top:638px" width="14" height="20" viewBox="0 0 14 20"><path d="M3,2 L11,10 L3,18" fill="none" stroke="#aaa" stroke-width="2.2" stroke-linecap="round" stroke-linejoin="round"/></svg>
<svg style="left:0;top:0" width="2502" height="1401" viewBox="0 0 2502 1401"><polygon points="501,623 759,623 781,648.5 759,674 501,674" fill="#00bf8a"/><polygon points="765,623 1023,623 1045,648.5 1023,674 765,674 787,648.5" fill="#fa586f"/><polygon points="1027,623 1285,623 1307,648.5 1285,674 1027,674 1049,648.5" fill="#e8e9ed"/><polygon points="1292,623 1550,623 1572,648.5 1550,674 1292,674 1314,648.5" fill="#e8e9ed"/><polygon points="1555,623 1813,623 1835,648.5 1813,674 1555,674 1577,648.5" fill="#e8e9ed"/><polyline points="435,719 876,719 892.5,703 909,719 1948,719" fill="none" stroke="#e3e3e3" stroke-width="2"/></svg>
<div class="t" style="left:534px;top:638px;font-size:22px;color:#fff">1 : 需求定义</div>
<div class="t" style="left:798px;top:638px;font-size:22px;color:#fff">2 : 概念设计</div>
<div class="t" style="left:1060px;top:638px;font-size:22px;color:#262626">3 : 开发验证（EVT）</div>
<div class="t" style="left:1325px;top:638px;font-size:22px;color:#262626">4 : 设计验证（DVT）</div>
<div class="t" style="left:1588px;top:638px;font-size:22px;color:#262626">5 : 量产准备（PVT）</div>
<div class="t" style="left:501px;top:755px;font-size:22px;font-weight:bold;color:#111;-webkit-text-stroke:0.2px #111">2 概念设计</div>
<div class="t" style="left:510px;top:812px;font-size:20.3px;color:#1f1f1f">延误天数</div>
<div class="t" style="left:610px;top:795px;font-size:39px;-webkit-text-stroke:0;color:#fa586f">217</div>
<div class="t" style="left:681px;top:817px;font-size:20.3px;color:#1f1f1f">天</div>
<div class="t" style="left:510px;top:855px;font-size:22px;color:#8c8c8c;white-space:pre;letter-spacing:0.45px">计划 2025-03-26</div>
<div class="t" style="left:964.6px;top:812px;font-size:20.3px;color:#1f1f1f">交付物</div>
<div class="t" style="left:1034px;top:795px;font-size:39px;-webkit-text-stroke:0;color:#111">1</div>
<div class="t" style="left:1062px;top:817px;font-size:20.3px;color:#1f1f1f">个</div>
<div class="t" style="left:964.6px;top:855px;font-size:22px;color:#8c8c8c;white-space:pre">计划 1 个  未完成  0 个</div>
<div class="t" style="left:1418.6px;top:812px;font-size:20.3px;color:#1f1f1f">至本阶段工作量</div>
<div class="t" style="left:1572px;top:795px;font-size:39px;-webkit-text-stroke:0;color:#fa586f">78</div>
<div class="t" style="left:1623px;top:817px;font-size:20.3px;color:#1f1f1f">人天</div>
<div class="t" style="left:1418.6px;top:855px;font-size:22px;color:#8c8c8c;white-space:pre">计划  10  人天; 合计  655 人天</div>
<div class="card" style="left:1996px;top:533px;width:506px;height:498px"></div>
<div class="a" style="left:2018.1px;top:552px;width:244.9px;height:38.8px;border-radius:0 0 14px 0;overflow:hidden"><div class="a" style="left:0.0px;top:0.0px;width:13.4px;height:12.7px;background:#fefefe"></div><div class="a" style="left:12.8px;top:0.0px;width:14.5px;height:12.7px;background:#fefefe"></div><div class="a" style="left:26.7px;top:0.0px;width:13.9px;height:12.7px;background:#fefefe"></div><div class="a" style="left:40.0px;top:0.0px;width:14.5px;height:12.7px;background:#fefefe"></div><div class="a" style="left:53.9px;top:0.0px;width:13.7px;height:12.7px;background:#fdfdfd"></div><div class="a" style="left:67.0px;top:0.0px;width:14.5px;height:12.7px;background:#fdfdfd"></div><div class="a" style="left:80.9px;top:0.0px;width:13.6px;height:12.7px;background:#fefefe"></div><div class="a" style="left:93.9px;top:0.0px;width:14.5px;height:12.7px;background:#fefefe"></div><div class="a" style="left:107.8px;top:0.0px;width:13.9px;height:12.7px;background:#fefefe"></div><div class="a" style="left:121.1px;top:0.0px;width:14.5px;height:12.7px;background:#fefefe"></div><div class="a" style="left:135.0px;top:0.0px;width:13.7px;height:12.7px;background:#fefefe"></div><div class="a" style="left:148.1px;top:0.0px;width:14.5px;height:12.7px;background:#f2f2f2"></div><div class="a" style="left:162.0px;top:0.0px;width:13.6px;height:12.7px;background:#fbfbfb"></div><div class="a" style="left:175.0px;top:0.0px;width:14.5px;height:12.7px;background:#fefefe"></div><div class="a" style="left:188.9px;top:0.0px;width:12.8px;height:12.7px;background:#f9f9f9"></div><div class="a" style="left:201.1px;top:0.0px;width:13.9px;height:12.7px;background:#fefefe"></div><div class="a" style="left:214.4px;top:0.0px;width:14.0px;height:12.7px;background:#fefefe"></div><div class="a" style="left:227.8px;top:0.0px;width:13.9px;height:12.7px;background:#fefefe"></div><div class="a" style="left:241.1px;top:0.0px;width:4.4px;height:12.7px;background:#fefefe"></div><div class="a" style="left:0.0px;top:12.1px;width:13.4px;height:14.5px;background:#bdbdbd"></div><div class="a" style="left:12.8px;top:12.1px;width:14.5px;height:14.5px;background:#a9a9a9"></div><div class="a" style="left:26.7px;top:12.1px;width:13.9px;height:14.5px;background:#a3a3a3"></div><div class="a" style="left:40.0px;top:12.1px;width:14.5px;height:14.5px;background:#aaaaaa"></div><div class="a" style="left:53.9px;top:12.1px;width:13.7px;height:14.5px;background:#aaaaaa"></div><div class="a" style="left:67.0px;top:12.1px;width:14.5px;height:14.5px;background:#bcbcbc"></div><div class="a" style="left:80.9px;top:12.1px;width:13.6px;height:14.5px;background:#d2d2d2"></div><div class="a" style="left:93.9px;top:12.1px;width:14.5px;height:14.5px;background:#b8b8b8"></div><div class="a" style="left:107.8px;top:12.1px;width:13.9px;height:14.5px;background:#a6a6a6"></div><div class="a" style="left:121.1px;top:12.1px;width:14.5px;height:14.5px;background:#a8a8a8"></div><div class="a" style="left:135.0px;top:12.1px;width:13.7px;height:14.5px;background:#c0c0c0"></div><div class="a" style="left:148.1px;top:12.1px;width:14.5px;height:14.5px;background:#848484"></div><div class="a" style="left:162.0px;top:12.1px;width:13.6px;height:14.5px;background:#b8b8b8"></div><div class="a" style="left:175.0px;top:12.1px;width:14.5px;height:14.5px;background:#989898"></div><div class="a" style="left:188.9px;top:12.1px;width:12.8px;height:14.5px;background:#b0b0b0"></div><div class="a" style="left:201.1px;top:12.1px;width:13.9px;height:14.5px;background:#a6a6a6"></div><div class="a" style="left:214.4px;top:12.1px;width:14.0px;height:14.5px;background:#b4b4b4"></div><div class="a" style="left:227.8px;top:12.1px;width:13.9px;height:14.5px;background:#b1b1b1"></div><div class="a" style="left:241.1px;top:12.1px;width:4.4px;height:14.5px;background:#aaaaaa"></div><div class="a" style="left:0.0px;top:26.0px;width:13.4px;height:13.4px;background:#d8d8d8"></div><div class="a" style="left:12.8px;top:26.0px;width:14.5px;height:13.4px;background:#d9d9d9"></div><div class="a" style="left:26.7px;top:26.0px;width:13.9px;height:13.4px;background:#dbdbdb"></div><div class="a" style="left:40.0px;top:26.0px;width:14.5px;height:13.4px;background:#dbdbdb"></div><div class="a" style="left:53.9px;top:26.0px;width:13.7px;height:13.4px;background:#d3d3d3"></div><div class="a" style="left:67.0px;top:26.0px;width:14.5px;height:13.4px;background:#e0e0e0"></div><div class="a" style="left:80.9px;top:26.0px;width:13.6px;height:13.4px;background:#e8e8e8"></div><div class="a" style="left:93.9px;top:26.0px;width:14.5px;height:13.4px;background:#dcdcdc"></div><div class="a" style="left:107.8px;top:26.0px;width:13.9px;height:13.4px;background:#dadada"></div><div class="a" style="left:121.1px;top:26.0px;width:14.5px;height:13.4px;background:#cfcfcf"></div><div class="a" style="left:135.0px;top:26.0px;width:13.7px;height:13.4px;background:#c9c9c9"></div><div class="a" style="left:148.1px;top:26.0px;width:14.5px;height:13.4px;background:#c4c4c4"></div><div class="a" style="left:162.0px;top:26.0px;width:13.6px;height:13.4px;background:#b0b0b0"></div><div class="a" style="left:175.0px;top:26.0px;width:14.5px;height:13.4px;background:#cfcfcf"></div><div class="a" style="left:188.9px;top:26.0px;width:12.8px;height:13.4px;background:#d0d0d0"></div><div class="a" style="left:201.1px;top:26.0px;width:13.9px;height:13.4px;background:#c7c7c7"></div><div class="a" style="left:214.4px;top:26.0px;width:14.0px;height:13.4px;background:#bbbbbb"></div><div class="a" style="left:227.8px;top:26.0px;width:13.9px;height:13.4px;background:#d9d9d9"></div><div class="a" style="left:241.1px;top:26.0px;width:4.4px;height:13.4px;background:#d9d9d9"></div></div>
<div class="t" style="left:2262px;top:563px;font-size:25px;color:#1f1f1f">发</div>
<div class="a" style="left:2018px;top:621px;width:80px;height:40px;background:#e6f4ff;border-radius:3px"></div>
<div class="t" style="left:2025px;top:632px;font-size:21.5px;color:#1a8ae6">进行中</div>
<div class="a" style="left:2115px;top:621px;width:152px;height:40px;background:#f2f2f2;border-radius:3px"></div>
<div class="t" style="left:2128px;top:632px;font-size:21.5px;color:#8c8c8c;letter-spacing:0.7px">2025000004</div>
<div class="t" style="left:2018px;top:690.5px;font-size:21.3px;color:#8c8c8c">项目经理</div>
<div class="t" style="left:2018px;top:739.9px;font-size:21.3px;color:#8c8c8c">组合</div>
<div class="t" style="left:2173px;top:739.9px;font-size:21.3px;color:#262626">电子制造研发和交付</div>
<div class="t" style="left:2018px;top:789.5px;font-size:21.3px;color:#8c8c8c">项目群</div>
<div class="t" style="left:2018px;top:839.1px;font-size:21.3px;color:#8c8c8c">所属部门</div>
<div class="t" style="left:2018px;top:888.1px;font-size:21.3px;color:#8c8c8c">开始时间</div>
<div class="t" style="left:2173px;top:888.1px;font-size:21.3px;color:#262626;letter-spacing:1px">2024-02-28</div>
<div class="t" style="left:2018px;top:938.2px;font-size:21.3px;color:#8c8c8c">结束时间</div>
<div class="t" style="left:2173px;top:938.2px;font-size:21.3px;color:#262626;letter-spacing:1px">2025-11-25</div>
<div class="t" style="left:2018px;top:986.5px;font-size:21.3px;color:#8c8c8c">完成率</div>
<div class="t" style="left:2173px;top:986.5px;font-size:21.3px;color:#262626">15%</div>
<div class="a" style="left:2166.3px;top:686.1px;width:92.5px;height:26.5px;border-radius:12px 0 0 0;overflow:hidden"><div class="a" style="left:0.0px;top:0.0px;width:14.5px;height:13.5px;background:#f7f7f7"></div><div class="a" style="left:13.9px;top:0.0px;width:13.5px;height:13.5px;background:#d6d6d6"></div><div class="a" style="left:26.8px;top:0.0px;width:14.5px;height:13.5px;background:#c8c8c8"></div><div class="a" style="left:40.7px;top:0.0px;width:12.8px;height:13.5px;background:#dcdcdc"></div><div class="a" style="left:52.9px;top:0.0px;width:13.5px;height:13.5px;background:#d6d6d6"></div><div class="a" style="left:65.8px;top:0.0px;width:14.5px;height:13.5px;background:#dadada"></div><div class="a" style="left:79.7px;top:0.0px;width:13.4px;height:13.5px;background:#dedede"></div><div class="a" style="left:0.0px;top:12.9px;width:14.5px;height:14.2px;background:#f4f4f4"></div><div class="a" style="left:13.9px;top:12.9px;width:13.5px;height:14.2px;background:#d3d3d3"></div><div class="a" style="left:26.8px;top:12.9px;width:14.5px;height:14.2px;background:#e0e0e0"></div><div class="a" style="left:40.7px;top:12.9px;width:12.8px;height:14.2px;background:#cccccc"></div><div class="a" style="left:52.9px;top:12.9px;width:13.5px;height:14.2px;background:#d6d6d6"></div><div class="a" style="left:65.8px;top:12.9px;width:14.5px;height:14.2px;background:#cbcbcb"></div><div class="a" style="left:79.7px;top:12.9px;width:13.4px;height:14.2px;background:#dfdfdf"></div></div>
<div class="a" style="left:2166.3px;top:834.4px;width:171.7px;height:26.4px;border-radius:14px 4px 6px 0;overflow:hidden"><div class="a" style="left:0.0px;top:0.0px;width:14.5px;height:13.8px;background:#fcfcfc"></div><div class="a" style="left:13.9px;top:0.0px;width:13.5px;height:13.8px;background:#c8c8c8"></div><div class="a" style="left:26.8px;top:0.0px;width:14.5px;height:13.8px;background:#d6d6d6"></div><div class="a" style="left:40.7px;top:0.0px;width:12.8px;height:13.8px;background:#d1d1d1"></div><div class="a" style="left:52.9px;top:0.0px;width:13.5px;height:13.8px;background:#bcbcbc"></div><div class="a" style="left:65.8px;top:0.0px;width:14.5px;height:13.8px;background:#dcdcdc"></div><div class="a" style="left:79.7px;top:0.0px;width:13.4px;height:13.8px;background:#e0e0e0"></div><div class="a" style="left:92.5px;top:0.0px;width:14.8px;height:13.8px;background:#d6d6d6"></div><div class="a" style="left:106.7px;top:0.0px;width:13.6px;height:13.8px;background:#d0d0d0"></div><div class="a" style="left:119.7px;top:0.0px;width:14.5px;height:13.8px;background:#d2d2d2"></div><div class="a" style="left:133.6px;top:0.0px;width:13.8px;height:13.8px;background:#d5d5d5"></div><div class="a" style="left:146.8px;top:0.0px;width:14.5px;height:13.8px;background:#dadada"></div><div class="a" style="left:160.7px;top:0.0px;width:11.6px;height:13.8px;background:#dedede"></div><div class="a" style="left:0.0px;top:13.2px;width:14.5px;height:13.8px;background:#ececec"></div><div class="a" style="left:13.9px;top:13.2px;width:13.5px;height:13.8px;background:#b8b8b8"></div><div class="a" style="left:26.8px;top:13.2px;width:14.5px;height:13.8px;background:#c8c8c8"></div><div class="a" style="left:40.7px;top:13.2px;width:12.8px;height:13.8px;background:#d8d8d8"></div><div class="a" style="left:52.9px;top:13.2px;width:13.5px;height:13.8px;background:#cacaca"></div><div class="a" style="left:65.8px;top:13.2px;width:14.5px;height:13.8px;background:#cacaca"></div><div class="a" style="left:79.7px;top:13.2px;width:13.4px;height:13.8px;background:#d1d1d1"></div><div class="a" style="left:92.5px;top:13.2px;width:14.8px;height:13.8px;background:#c9c9c9"></div><div class="a" style="left:106.7px;top:13.2px;width:13.6px;height:13.8px;background:#b5b5b5"></div><div class="a" style="left:119.7px;top:13.2px;width:14.5px;height:13.8px;background:#cbcbcb"></div><div class="a" style="left:133.6px;top:13.2px;width:13.8px;height:13.8px;background:#d2d2d2"></div><div class="a" style="left:146.8px;top:13.2px;width:14.5px;height:13.8px;background:#bcbcbc"></div><div class="a" style="left:160.7px;top:13.2px;width:11.6px;height:13.8px;background:#c6c6c6"></div></div>
<div class="t" style="left:2337px;top:838px;font-size:21.3px;color:#262626">造事业部</div>
<div class="card" style="left:1996px;top:1053px;width:506px;height:251px"></div>
<div class="t ct" style="left:2018px;top:1084px">项目活动</div>
<div class="t big" style="left:2020px;top:1129px">24</div>
<div class="t unit" style="left:2095px;top:1150px">个</div>
<div class="bar" style="left:2022px;top:1201px;width:304px;background:#fa586f"></div><div class="bar" style="left:2326px;top:1201px;width:152px;background:#00bf8a"></div>
<div class="t sub" style="left:2022px;top:1228px">严重延误16个，已完成8个</div>
<div class="card" style="left:1996px;top:1325px;width:506px;height:120px"></div>
<div class="t ct" style="left:2018px;top:1357px">活动按期完成率</div>
<div class="card" style="left:409px;top:1028px;width:1564px;height:420px"></div>
<div class="t ct" style="left:430px;top:1060px">项目成本跟踪</div>
<div class="t" style="left:536px;top:1128px;font-size:19.5px;color:#666">预算累计</div>
<div class="t" style="left:679px;top:1128px;font-size:19.5px;color:#666">实际累计</div>
<div class="t" style="left:823px;top:1128px;font-size:19.5px;color:#666">投资概算</div>
<div class="t" style="left:462px;top:1199.3px;font-size:19.5px;color:#999">5M</div>
<div class="t" style="left:462px;top:1264.5px;font-size:19.5px;color:#999">4M</div>
<div class="t" style="left:462px;top:1331.5px;font-size:19.5px;color:#999">3M</div>
<svg style="left:0;top:0" width="2502" height="1401" viewBox="0 0 2502 1401"><path d="M486,1137.5 H527" stroke="#1a95f0" stroke-width="3"/><circle cx="506.5" cy="1137.5" r="8.5" fill="#fff" stroke="#1a95f0" stroke-width="3"/><path d="M630,1137.5 H671" stroke="#1fc16b" stroke-width="3"/><circle cx="650.5" cy="1137.5" r="8.5" fill="#fff" stroke="#1fc16b" stroke-width="3"/><path d="M773,1137.5 H814" stroke="#fcc42b" stroke-width="3"/><circle cx="793.5" cy="1137.5" r="8.5" fill="#fff" stroke="#fcc42b" stroke-width="3"/><path d="M503,1208.8 H1400" stroke="#e0e3e8" stroke-width="1.5" stroke-dasharray="6,5"/><path d="M503,1274 H1400" stroke="#e0e3e8" stroke-width="1.5" stroke-dasharray="6,5"/><path d="M503,1341 H1400" stroke="#e0e3e8" stroke-width="1.5" stroke-dasharray="6,5"/><path d="M503.5,1208 V1401" stroke="#d0d0d0" stroke-width="1.5"/><polyline points="593,1208.8 772.2,1208.8 951.4,1208.8 1130.6,1208.8 1309.8,1208.8" fill="none" stroke="#fcc42b" stroke-width="3"/><circle cx="593" cy="1208.8" r="6.5" fill="#fff" stroke="#fcc42b" stroke-width="2.5"/><circle cx="772.2" cy="1208.8" r="6.5" fill="#fff" stroke="#fcc42b" stroke-width="2.5"/><circle cx="951.4" cy="1208.8" r="6.5" fill="#fff" stroke="#fcc42b" stroke-width="2.5"/><circle cx="1130.6" cy="1208.8" r="6.5" fill="#fff" stroke="#fcc42b" stroke-width="2.5"/><circle cx="1309.8" cy="1208.8" r="6.5" fill="#fff" stroke="#fcc42b" stroke-width="2.5"/><polyline points="951.4,1481 1130.6,1315.8 1309.8,1286.9" fill="none" stroke="#1a95f0" stroke-width="3"/><circle cx="1130.6" cy="1315.8" r="6.5" fill="#fff" stroke="#1a95f0" stroke-width="2.5"/><circle cx="1309.8" cy="1286.9" r="6.5" fill="#fff" stroke="#1a95f0" stroke-width="2.5"/></svg>
<div class="t" style="left:1469px;top:1147px;font-size:21.3px;color:#1f1f1f">投资概算</div>
<div class="a" style="left:1815.2px;top:1142.7px;width:78.2px;height:26.7px;border-radius:0 8px 8px 0;overflow:hidden"><div class="a" style="left:0.0px;top:0.0px;width:14.5px;height:14.6px;background:#cacaca"></div><div class="a" style="left:13.9px;top:0.0px;width:14.0px;height:14.6px;background:#c6c6c6"></div><div class="a" style="left:27.3px;top:0.0px;width:13.9px;height:14.6px;background:#c6c6c6"></div><div class="a" style="left:40.6px;top:0.0px;width:13.9px;height:14.6px;background:#cacaca"></div><div class="a" style="left:53.9px;top:0.0px;width:14.6px;height:14.6px;background:#dadada"></div><div class="a" style="left:67.9px;top:0.0px;width:10.9px;height:14.6px;background:#c3c3c3"></div><div class="a" style="left:0.0px;top:14.0px;width:14.5px;height:13.3px;background:#c6c6c6"></div><div class="a" style="left:13.9px;top:14.0px;width:14.0px;height:13.3px;background:#c6c6c6"></div><div class="a" style="left:27.3px;top:14.0px;width:13.9px;height:13.3px;background:#c6c6c6"></div><div class="a" style="left:40.6px;top:14.0px;width:13.9px;height:13.3px;background:#cbcbcb"></div><div class="a" style="left:53.9px;top:14.0px;width:14.6px;height:13.3px;background:#c8c8c8"></div><div class="a" style="left:67.9px;top:14.0px;width:10.9px;height:13.3px;background:#c5c5c5"></div></div>
<div class="t" style="left:1893px;top:1146px;font-size:21.3px;color:#1f1f1f">0元</div>
<div class="a" style="left:1469px;top:1192px;width:463px;height:25px;background:#3ca0fb"></div>
<div class="t" style="left:1469px;top:1262px;font-size:21.3px;color:#1f1f1f">总成本预算</div>
<div class="a" style="left:1815.2px;top:1251.3px;width:74.6px;height:40.7px;border-radius:0 10px 8px 0;overflow:hidden"><div class="a" style="left:0.0px;top:0.0px;width:14.5px;height:14.0px;background:#fbfbfb"></div><div class="a" style="left:13.9px;top:0.0px;width:13.4px;height:14.0px;background:#fbfbfb"></div><div class="a" style="left:26.7px;top:0.0px;width:14.5px;height:14.0px;background:#fbfbfb"></div><div class="a" style="left:40.6px;top:0.0px;width:13.9px;height:14.0px;background:#fbfbfb"></div><div class="a" style="left:53.9px;top:0.0px;width:14.6px;height:14.0px;background:#fbfbfb"></div><div class="a" style="left:67.9px;top:0.0px;width:7.3px;height:14.0px;background:#fbfbfb"></div><div class="a" style="left:0.0px;top:13.4px;width:14.5px;height:13.9px;background:#bdbdbd"></div><div class="a" style="left:13.9px;top:13.4px;width:13.4px;height:13.9px;background:#a9a9a9"></div><div class="a" style="left:26.7px;top:13.4px;width:14.5px;height:13.9px;background:#bababa"></div><div class="a" style="left:40.6px;top:13.4px;width:13.9px;height:13.9px;background:#a6a6a6"></div><div class="a" style="left:53.9px;top:13.4px;width:14.6px;height:13.9px;background:#c6c6c6"></div><div class="a" style="left:67.9px;top:13.4px;width:7.3px;height:13.9px;background:#9e9e9e"></div><div class="a" style="left:0.0px;top:26.7px;width:14.5px;height:14.6px;background:#e9e9e9"></div><div class="a" style="left:13.9px;top:26.7px;width:13.4px;height:14.6px;background:#eeeeee"></div><div class="a" style="left:26.7px;top:26.7px;width:14.5px;height:14.6px;background:#efefef"></div><div class="a" style="left:40.6px;top:26.7px;width:13.9px;height:14.6px;background:#f5f5f5"></div><div class="a" style="left:53.9px;top:26.7px;width:14.6px;height:14.6px;background:#e8e8e8"></div><div class="a" style="left:67.9px;top:26.7px;width:7.3px;height:14.6px;background:#f0f0f0"></div></div>
<div class="t" style="left:1885px;top:1262px;font-size:21.3px;color:#1f1f1f">00元</div>
<div class="a" style="left:1469px;top:1308px;width:355px;height:25px;background:#3ca0fb"></div>
<div class="t" style="left:1469px;top:1378px;font-size:21.3px;color:#1f1f1f">当前成本预算</div>
<div class="t" style="left:1843px;top:1378px;font-size:21.3px;color:#1f1f1f;letter-spacing:0.5px">35,000元</div>
<div class="t" style="left:2384px;top:1361px;font-size:35px;font-weight:bold;color:#f00;-webkit-text-stroke:1px #f00;transform:scale(.74,1.04);transform-origin:0 0;letter-spacing:-0.5px">cxy5.com</div>

<div class="a" style="left:0;top:1399px;width:2502px;height:2px;background:#fff"></div>
</body></html>
